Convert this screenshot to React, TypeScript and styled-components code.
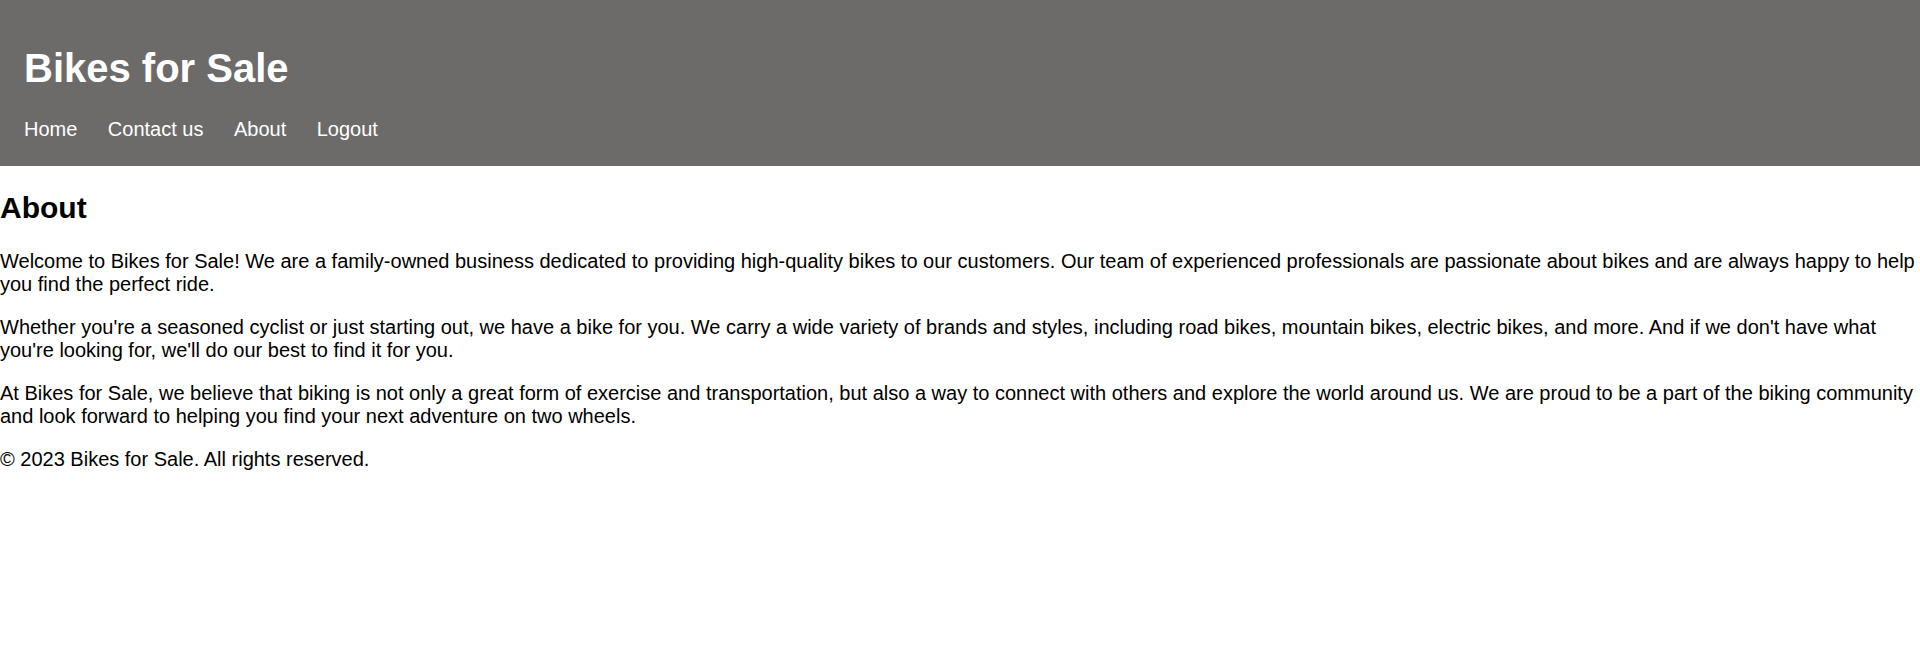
import React from "react";
import styled, { createGlobalStyle } from "styled-components";

const GlobalStyle = createGlobalStyle`
  html, body {
    margin: 0;
    padding: 0;
    background: #ffffff;
  }
  body {
    font-family: "Liberation Sans", Arial, Helvetica, sans-serif;
    font-size: 20px;
    color: #000000;
  }
`;

const Header = styled.header`
  background: #6c6b69;
  color: #ffffff;
  padding: 45px 24px 0;
  height: 166px;
  box-sizing: border-box;
`;

const Title = styled.h1`
  margin: 0 0 27px;
  font-size: 40px;
  font-weight: bold;
  line-height: 46px;
`;

const Nav = styled.nav`
  display: flex;
  gap: 30.5px;
`;

const NavLink = styled.a`
  color: #ffffff;
  text-decoration: none;
  font-size: 20px;
  line-height: 23px;
  cursor: pointer;
`;

const Main = styled.main`
  padding: 0;
`;

const Heading = styled.h2`
  font-size: 30px;
  font-weight: bold;
  margin: 25px 0 24px;
  line-height: 34.5px;
`;

const Paragraph = styled.p`
  margin: 0 0 20px;
  font-size: 20px;
  line-height: 23px;
`;

const Footer = styled.footer`
  font-size: 20px;
  line-height: 23px;
`;

const navItems = ["Home", "Contact us", "About", "Logout"];

export default function App() {
  return (
    <>
      <GlobalStyle />
      <Header>
        <Title>Bikes for Sale</Title>
        <Nav>
          {navItems.map((item) => (
            <NavLink key={item} href="#">
              {item}
            </NavLink>
          ))}
        </Nav>
      </Header>
      <Main>
        <Heading>About</Heading>
        <Paragraph>
          Welcome to Bikes for Sale! We are a family-owned business dedicated to providing
          high-quality bikes to our customers. Our team of experienced professionals are
          passionate about bikes and are always happy to help you find the perfect ride.
        </Paragraph>
        <Paragraph>
          Whether you're a seasoned cyclist or just starting out, we have a bike for you. We
          carry a wide variety of brands and styles, including road bikes, mountain bikes,
          electric bikes, and more. And if we don't have what you're looking for, we'll do our
          best to find it for you.
        </Paragraph>
        <Paragraph>
          At Bikes for Sale, we believe that biking is not only a great form of exercise and
          transportation, but also a way to connect with others and explore the world around
          us. We are proud to be a part of the biking community and look forward to helping you
          find your next adventure on two wheels.
        </Paragraph>
      </Main>
      <Footer>© 2023 Bikes for Sale. All rights reserved.</Footer>
    </>
  );
}
